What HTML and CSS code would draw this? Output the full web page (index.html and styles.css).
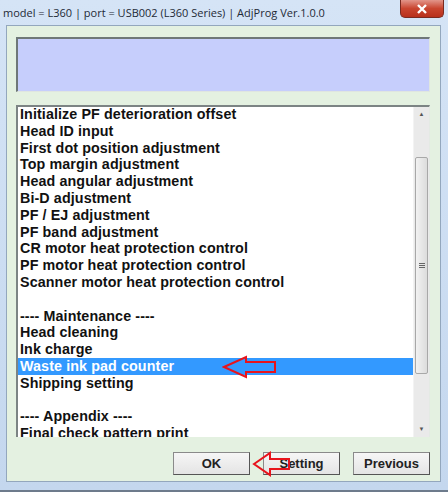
FILE: index.html
```html
<!DOCTYPE html>
<html lang="en">
<head>
    <meta charset="UTF-8">
    <title>AdjProg</title>
    <link rel="stylesheet" href="styles.css">
</head>
<body>
    <div class="window">
        <div class="titlebar">
            <span class="title">model = L360 | port = USB002 (L360 Series) | AdjProg Ver.1.0.0</span>
            <div class="close">
                <svg width="12" height="10" viewBox="0 0 12 10">
                    <path d="M2 1 L10 9 M10 1 L2 9" stroke="#fff" stroke-width="2.4"/>
                </svg>
            </div>
        </div>

        <div class="client">
            <div class="status-box"></div>

            <div class="listbox">
                <ul class="items">
                    <li>Initialize PF deterioration offset</li>
                    <li>Head ID input</li>
                    <li>First dot position adjustment</li>
                    <li>Top margin adjustment</li>
                    <li>Head angular adjustment</li>
                    <li>Bi-D adjustment</li>
                    <li>PF / EJ adjustment</li>
                    <li>PF band adjustment</li>
                    <li>CR motor heat protection control</li>
                    <li>PF motor heat protection control</li>
                    <li>Scanner motor heat protection control</li>
                    <li></li>
                    <li>---- Maintenance ----</li>
                    <li>Head cleaning</li>
                    <li>Ink charge</li>
                    <li class="selected">Waste ink pad counter</li>
                    <li>Shipping setting</li>
                    <li></li>
                    <li>---- Appendix ----</li>
                    <li>Final check pattern print</li>
                </ul>
                <div class="scrollbar">
                    <div class="arrow">&#9650;</div>
                    <div class="track">
                        <div class="thumb"><span class="grip"></span></div>
                    </div>
                    <div class="arrow">&#9660;</div>
                </div>
            </div>

            <div class="buttons">
                <button>OK</button>
                <button>Setting</button>
                <button>Previous</button>
            </div>
        </div>

        <!-- red arrows drawn over the screenshot -->
        <svg class="mark mark-list" width="56" height="24" viewBox="0 0 56 24">
            <path d="M2 12 L24 2 L24 7 L53 7 L53 17 L24 17 L24 22 Z" fill="none" stroke="#e8141c" stroke-width="2"/>
        </svg>
        <svg class="mark mark-ok" width="40" height="26" viewBox="0 0 40 26">
            <path d="M2 13 L18 2 L18 8 L37 8 L37 18 L18 18 L18 24 Z" fill="none" stroke="#e8141c" stroke-width="2"/>
        </svg>
    </div>
</body>
</html>
```

FILE: styles.css
```css
body {
    margin: 0;
    background: #c8daf0;
}
.window {
    position: relative;
    width: 448px;
    height: 492px;
    box-sizing: border-box;
    background: linear-gradient(#d5e4f6, #c4d7ee);
    border-bottom: 2px solid #6d7b8c;
    font-family: "Liberation Sans", Arial, sans-serif;
}
.titlebar {
    height: 25px;
    display: flex;
    align-items: flex-start;
    justify-content: space-between;
}
.title {
    font-family: "Open Sans", "Noto Sans", sans-serif;
    font-size: 11px;
    color: #1e2a36;
    margin: 5px 0 0 3px;
}
.close {
    width: 42px;
    height: 17px;
    margin-right: 4px;
    background: linear-gradient(#e2958a, #c9452f 50%, #b8301c);
    border: 1px solid #7a2a20;
    border-top: none;
    border-radius: 0 0 5px 5px;
    display: flex;
    align-items: center;
    justify-content: center;
}
.client {
    margin: 0 7px 0 6px;
    height: 457px;
    box-sizing: border-box;
    background: #e4f1e1;
    border: 1px solid #93a7bd;
    padding: 11px 10px 0 9px;
}
.status-box {
    height: 55px;
    background: #c6cefc;
    border-top: 2px solid #6f7878;
    border-left: 2px solid #6f7878;
    border-right: 1px solid #dfe6e0;
    border-bottom: 1px solid #dfe6e0;
    box-sizing: border-box;
}
.listbox {
    margin-top: 13px;
    height: 332px;
    box-sizing: border-box;
    background: #fff;
    border-top: 2px solid #7c8484;
    border-left: 2px solid #7c8484;
    border-right: 1px solid #e4eae4;
    display: flex;
    overflow: hidden;
}
.items {
    list-style: none;
    margin: -1px 0 0;
    padding: 0;
    flex: 1;
    font-size: 14.3px;
    font-weight: bold;
    letter-spacing: 0.1px;
    color: #111;
}
.items li {
    height: 16.8px;
    line-height: 16.8px;
    padding-left: 2px;
    white-space: nowrap;
}
.items li.selected {
    background: #3399ff;
    color: #fff;
}
.scrollbar {
    width: 15px;
    display: flex;
    flex-direction: column;
    background: #eaeaea;
    border-left: 1px solid #f3f3f3;
}
.arrow {
    height: 15px;
    font-size: 6px;
    color: #555;
    text-align: center;
    line-height: 15px;
}
.track {
    flex: 1;
    padding-top: 35px;
}
.thumb {
    height: 215px;
    margin: 0 1px;
    border: 1px solid #a8a8a8;
    border-radius: 2px;
    background: linear-gradient(90deg, #f2f2f2, #dcdcdc);
    display: flex;
    align-items: center;
    justify-content: center;
}
.grip {
    width: 6px;
    height: 6px;
    background: repeating-linear-gradient(#666 0 1px, transparent 1px 2px);
}
.buttons {
    display: flex;
    justify-content: flex-end;
    gap: 13px;
    margin-top: 15px;
}
.buttons button {
    width: 77px;
    height: 23px;
    font-family: "Liberation Sans", Arial, sans-serif;
    font-size: 13px;
    font-weight: bold;
    color: #222;
    background: linear-gradient(#f6f6f6, #e4e4e4);
    border: 1px solid #8a8a8a;
    border-right-color: #555;
    border-bottom-color: #555;
    padding: 0;
}
.mark {
    position: absolute;
}
.mark-list {
    left: 222px;
    top: 355px;
}
.mark-ok {
    left: 252px;
    top: 451px;
}
```
